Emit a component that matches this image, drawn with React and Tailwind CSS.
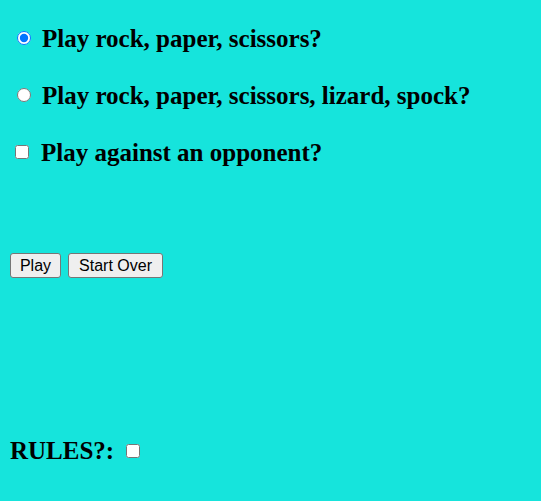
import React from 'react';

const labelText = "font-['Liberation_Serif','Times_New_Roman',serif] text-[25px] leading-[28px] font-bold text-black";

const btn =
  "h-[25px] bg-[#efefef] border border-[#767676] rounded-[3px] font-['Liberation_Sans',Arial,sans-serif] text-[16px] leading-none text-black";

export default function App() {
  return (
    <div className="min-h-[501px] w-full bg-[#16e4dc] flex flex-col pt-[25px]">
      <div className="flex flex-col gap-[29px]">
        <label className="flex items-center h-[28px]">
          <input type="radio" name="mode" defaultChecked className="m-0 ml-[17px] w-[14px] h-[14px] -translate-y-px" />
          <span className={`${labelText} ml-[11px]`}>Play rock, paper, scissors?</span>
        </label>
        <label className="flex items-center h-[28px]">
          <input type="radio" name="mode" className="m-0 ml-[17px] w-[14px] h-[14px] -translate-y-px" />
          <span className={`${labelText} ml-[11px]`}>Play rock, paper, scissors, lizard, spock?</span>
        </label>
        <label className="flex items-center h-[28px]">
          <input type="checkbox" className="m-0 ml-[15px] w-[14px] h-[14px] -translate-y-px" />
          <span className={`${labelText} ml-[12px]`}>Play against an opponent?</span>
        </label>
      </div>

      <div className="flex gap-[7px] pl-[10px] mt-[86px]">
        <button className={`${btn} w-[51px]`}>Play</button>
        <button className={`${btn} w-[95px]`}>Start Over</button>
      </div>

      <div className="flex items-center h-[28px] pl-[10px] mt-[159px]">
        <span className={labelText}>RULES?:</span>
        <input type="checkbox" className="m-0 ml-[12px] w-[14px] h-[14px]" />
      </div>
    </div>
  );
}
